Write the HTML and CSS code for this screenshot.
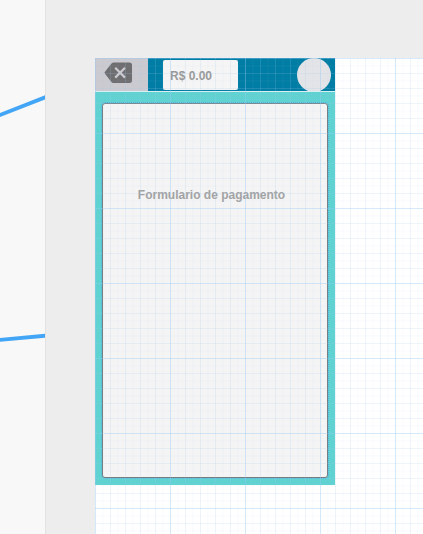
FILE: index.html
```
<!DOCTYPE html>
<html lang="pt-BR">
<head>
<meta charset="utf-8">
<title>Formulario de pagamento</title>
<link rel="stylesheet" href="styles.css">
</head>
<body>
<div class="editor">
  <aside class="sidebar">
    <svg class="connectors" width="45" height="534" viewBox="0 0 45 534" fill="none" stroke="#42a5f5" stroke-width="3.8">
      <path d="M-2 115.8 47 96.6"/>
      <path d="M-2 340 47 335.6"/>
    </svg>
  </aside>
  <main class="workspace">
    <div class="canvas">
      <section class="screen">
        <header class="topbar">
          <div class="back">
            <svg width="29" height="22" viewBox="0 0 29 22">
              <path d="M9.5.5H25.5Q28 .5 28 3V18.500Q28 21 25.500 21H9.500Q8 21 7 19.500L.8 11.500Q.2 10.700.8 10L7 2Q8 .5 9.500 .5Z" fill="#6e6e70"/>
              <path d="M11.200 5.800 21 15.600M21 5.800 11.200 15.600" stroke="#cacad0" stroke-width="2.200"/>
            </svg>
          </div>
          <div class="amount">R$ 0.00</div>
          <div class="avatar"></div>
        </header>
        <div class="content">
          <div class="form"><h1 class="title">Formulario de pagamento</h1></div>
        </div>
      </section>
      <div class="grid"></div>
    </div>
  </main>
</div>
</body>
</html>
```
FILE: styles.css
```
* {
  box-sizing: border-box;
}

body {
  margin: 0;
  overflow: hidden;
  font-family: "Liberation Sans", Arial, sans-serif;
}

.editor {
  display: flex;
  width: 423px;
  height: 534px;
  background: #ededed;
}

.sidebar {
  flex: 0 0 46px;
  background: #f8f8f8;
  border-right: 1px solid #e2e2e2;
}

.connectors {
  display: block;
}

.workspace {
  flex: 1;
  padding: 58px 0 0 49px;
}

.canvas {
  position: relative;
  height: 476px;
  background: #fff;
}

.grid {
  position: absolute;
  inset: 0;
  pointer-events: none;
  background-image:
    linear-gradient(90deg, rgba(144, 202, 249, 0.26) 1px, transparent 1px),
    linear-gradient(rgba(144, 202, 249, 0.26) 1px, transparent 1px),
    linear-gradient(90deg, rgba(160, 205, 245, 0.12) 1px, transparent 1px),
    linear-gradient(rgba(160, 205, 245, 0.12) 1px, transparent 1px),
    linear-gradient(90deg, rgba(170, 190, 220, 0.08) 1px, transparent 1px),
    linear-gradient(rgba(170, 190, 220, 0.08) 1px, transparent 1px);
  background-size: 75px 75px, 75px 75px, 15px 15px, 15px 15px, 7.5px 7.5px, 7.5px 7.5px;
}

.screen {
  display: flex;
  flex-direction: column;
  width: 240px;
  height: 427px;
}

.topbar {
  display: flex;
  align-items: center;
  height: 33px;
  background: #007da4;
}

.back {
  width: 53px;
  height: 33px;
  padding: 4px 0 0 9px;
  background: #cacad0;
}

.amount {
  width: 75px;
  height: 30px;
  margin-left: 15px;
  padding-left: 7px;
  border-radius: 2px;
  background: #f5f5f5;
  color: #999;
  font-size: 12px;
  font-weight: bold;
  line-height: 33px;
}

.avatar {
  width: 34px;
  height: 34px;
  margin-left: 59px;
  border-radius: 50%;
  background: #e3e4e8;
}

.content {
  flex: 1;
  padding: 11px 7px 7px;
  border-top: 1px solid #d8f0f2;
  background: #60d2d1;
}

.form {
  height: 375px;
  border: 1px solid #747b80;
  border-radius: 3px;
  outline: 1px dotted #4eb4dc;
  background: #f4f4f5;
  text-align: center;
}

.title {
  margin: 84px 7px 0 0;
  color: #a2a2a2;
  font-size: 12px;
  font-weight: bold;
  line-height: 15px;
}
```
